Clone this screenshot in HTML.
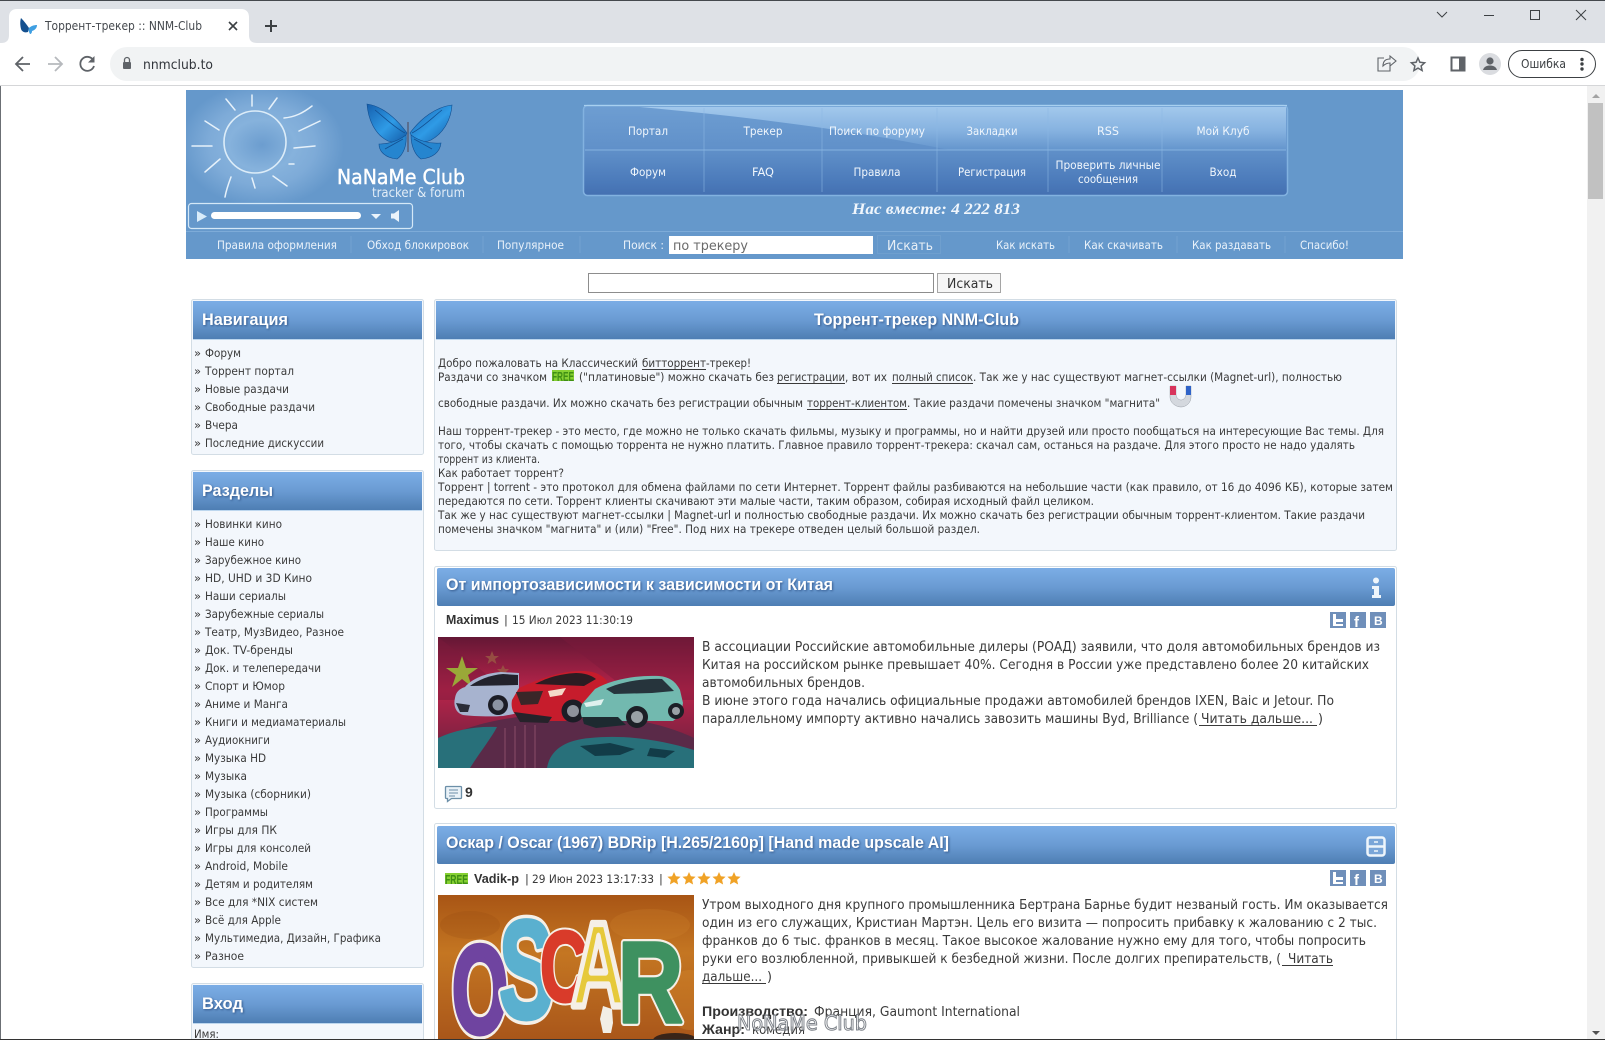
<!DOCTYPE html>
<html lang="ru"><head><meta charset="utf-8"><title>Торрент-трекер :: NNM-Club</title>
<style>
html,body{margin:0;padding:0;background:#fff;overflow:hidden}
svg{display:block;position:absolute;left:0;top:0}
text{white-space:pre}
.t{font:11.5px "DejaVu Sans",sans-serif;fill:#3a3a3a}
.a{font:13.5px "DejaVu Sans",sans-serif;fill:#3a3a3a}
.ab{font:bold 14px "Liberation Sans",sans-serif;fill:#333}
.h{font:bold 16.5px "Liberation Sans",sans-serif;fill:#fff;filter:drop-shadow(1px 1px 1px #34598c)}
.n{font:11.5px "DejaVu Sans",sans-serif;fill:#eaf2fa}
.m{font:11.5px "DejaVu Sans",sans-serif;fill:#f0f6fc;text-anchor:middle}
.os{font-family:"Liberation Sans",sans-serif;font-weight:bold;font-size:100px}
</style></head><body>
<svg width="1605" height="1040" viewBox="0 0 1605 1040" xmlns="http://www.w3.org/2000/svg">
<defs>
<linearGradient id="hd" x1="0" y1="0" x2="0" y2="1"><stop offset="0" stop-color="#7badE6"/><stop offset=".5" stop-color="#6a9bd3"/><stop offset="1" stop-color="#4e7eb3"/></linearGradient>
<linearGradient id="mn" x1="0" y1="0" x2="0" y2="1"><stop offset="0" stop-color="#6e9ed2"/><stop offset=".5" stop-color="#6090c9"/><stop offset=".85" stop-color="#4b7aba"/><stop offset="1" stop-color="#4470b1"/></linearGradient>
<linearGradient id="gl" x1="0" y1="0" x2="0" y2="1"><stop offset="0" stop-color="#a2c8ec"/><stop offset=".55" stop-color="#86b2e0"/><stop offset="1" stop-color="#6495cd"/></linearGradient>
<radialGradient id="sun"><stop offset="0" stop-color="#6c9dcf"/><stop offset=".4" stop-color="#86b2dc"/><stop offset=".65" stop-color="#7eabd8"/><stop offset="1" stop-color="#6598cb"/></radialGradient>
<linearGradient id="wing" x1="0" y1="0" x2="1" y2="1"><stop offset="0" stop-color="#155fae"/><stop offset=".55" stop-color="#2f9be6"/><stop offset="1" stop-color="#135aa6"/></linearGradient>
<linearGradient id="car" x1="0" y1="0" x2="0" y2="1"><stop offset="0" stop-color="#641735"/><stop offset=".4" stop-color="#b8244a"/><stop offset=".72" stop-color="#8a2243"/><stop offset="1" stop-color="#3c2a42"/></linearGradient>
<linearGradient id="osc" x1="0" y1="0" x2="0" y2="1"><stop offset="0" stop-color="#a85515"/><stop offset=".4" stop-color="#c47622"/><stop offset="1" stop-color="#a9561a"/></linearGradient>
<clipPath id="c0"><rect x="186" y="90" width="1217" height="169"/></clipPath>
<clipPath id="c1"><rect x="438" y="637" width="256" height="131"/></clipPath>
<clipPath id="c2"><rect x="438" y="895" width="256" height="145"/></clipPath>
</defs>

<!-- browser chrome -->
<rect width="1605" height="43" fill="#dee1e6"/>
<rect width="1605" height="1" fill="#44484d"/>
<rect y="43" width="1605" height="42" fill="#fff"/>
<rect y="85" width="1605" height="1" fill="#d5d6d8"/>
<path d="M1 43C7 43 9 40 9 35V17C9 12 12 9 17 9H241C246 9 249 12 249 17V35C249 40 251 43 257 43Z" fill="#fff"/>
<g transform="translate(20,18)"><path d="M1 0C4 3 7 7 9 10L8 14C5 15 2 14 1 11C0 7 0 3 1 0Z" fill="#14508f"/><path d="M9 10C11 8 14 7 17 7C17 10 15 12 12 13C12 15 11 16 10 16C9 14 8 12 9 10Z" fill="#3f9fe2"/></g>
<text x="45" y="30" textLength="157" lengthAdjust="spacingAndGlyphs" style="font:12.5px 'DejaVu Sans',sans-serif;fill:#45494e">Торрент-трекер :: NNM-Club</text>
<path d="M229 22l8 8M237 22l-8 8" stroke="#3c4043" stroke-width="1.6"/>
<path d="M271 20v12M265 26h12" stroke="#3c4043" stroke-width="2"/>
<rect x="110" y="47" width="1310" height="34" rx="17" fill="#f1f3f4"/>
<path d="M30 64H17M23 57l-7 7 7 7" fill="none" stroke="#5f6368" stroke-width="1.8"/>
<path d="M48 64H61M55 57l7 7-7 7" fill="none" stroke="#b6b9bd" stroke-width="1.8"/>
<path d="M93.5 60.5A7 7 0 1 0 94 66" fill="none" stroke="#5f6368" stroke-width="1.8"/><path d="M94.500 56v6.500h-6.500z" fill="#5f6368"/>
<rect x="123" y="62" width="8" height="7" rx="1" fill="#5f6368"/><path d="M124.500 62v-2a2.500 2.500 0 0 1 5 0v2" fill="none" stroke="#5f6368" stroke-width="1.300"/>
<text x="143" y="69" textLength="70" lengthAdjust="spacingAndGlyphs" style="font:13.500px 'DejaVu Sans',sans-serif;fill:#30343a">nnmclub.to</text>
<path d="M1384 58h-6v13h12v-5M1383 66c0-5 3-7 7-7v-3l6 5-6 5v-3c-3 0-5 1-7 3z" fill="none" stroke="#5f6368" stroke-width="1.100"/>
<path d="M1418 58l1.900 4.300 4.700.5-3.500 3.100 1 4.600-4.100-2.400-4.100 2.400 1-4.600-3.500-3.100 4.700-.5z" fill="none" stroke="#5f6368" stroke-width="1.500"/>
<rect x="1451.500" y="57.500" width="13" height="13" fill="none" stroke="#5f6368" stroke-width="2"/><rect x="1459" y="57" width="6" height="14" fill="#5f6368"/>
<circle cx="1490" cy="64" r="11" fill="#dadce0"/><circle cx="1490" cy="61" r="3.600" fill="#5f6368"/><path d="M1483 70c1-3.500 4-4.500 7-4.500s6 1 7 4.500z" fill="#5f6368"/>
<rect x="1508.500" y="50.500" width="87" height="27" rx="13.500" fill="#fff" stroke="#3c4043" stroke-width="1"/>
<text x="1521" y="68" textLength="45" lengthAdjust="spacingAndGlyphs" style="font:12.500px 'DejaVu Sans',sans-serif;fill:#3c4043">Ошибка</text>
<circle cx="1582" cy="59.500" r="1.700" fill="#3c4043"/><circle cx="1582" cy="64" r="1.700" fill="#3c4043"/><circle cx="1582" cy="69" r="1.700" fill="#3c4043"/>
<path d="M1437 12l5 5 5-5" fill="none" stroke="#3c4043" stroke-width="1"/>
<path d="M1484 15.500h10" stroke="#3c4043" stroke-width="1"/>
<rect x="1530.500" y="10.500" width="9" height="9" fill="none" stroke="#3c4043" stroke-width="1"/>
<path d="M1576 10l10 10M1586 10l-10 10" stroke="#3c4043" stroke-width="1"/>

<!-- scrollbar -->
<rect x="1587" y="86" width="18" height="954" fill="#f1f1f1"/>
<rect x="1588" y="103" width="15" height="96" fill="#c1c1c1"/>
<path d="M1592 98l4-4 4 4z" fill="#a3a3a3"/><path d="M1592 1031l4 4 4-4z" fill="#505050"/>

<!-- site header -->
<rect x="186" y="90" width="1217" height="169" fill="#6598cb"/>
<rect x="186" y="231" width="1217" height="1" fill="#7dabd8"/>
<g clip-path="url(#c0)"><ellipse cx="262" cy="145" rx="82" ry="62" fill="url(#sun)"/></g>
<circle cx="255" cy="142" r="31" fill="none" stroke="#dcecf8" stroke-width="1.600"/>
<g fill="none" stroke="#e6f1fa" stroke-width="1.500" stroke-linecap="round">
<path d="M226 99l9 11M252 95v11M277 98l-8 11M312 106c-9 7-17 11-28 12M320 121l-21 10M315 146l-21 2M294 164h-5M287 186l-14-10M252 178l3 10M231 177c-3 8-5 14-6 20M220 159l-15 13M219 130l-14-9M212 146h-20"/></g>
<g stroke="#134f90" stroke-width=".6">
<path d="M407 133C396 118 382 106 367 104C368 118 374 134 388 141C396 144 404 141 407 133Z" fill="url(#wing)"/>
<path d="M406 135C398 141 388 144 379 144C379 152 386 158 397 159C403 155 407 146 406 135Z" fill="#2585cf"/>
<path d="M410 133C421 118 436 107 452 105C451 119 444 133 431 140C423 144 414 141 410 133Z" fill="url(#wing)"/>
<path d="M411 135C419 141 430 144 441 143C440 152 433 158 421 159C415 155 411 146 411 135Z" fill="#2585cf"/>
<path d="M375 110C385 118 395 128 405 133M442 110C432 118 422 128 412 133M385 149l18-10M432 149l-18-10" fill="none" stroke-width=".8"/>
<path d="M408 122v30" stroke="#56617a" stroke-width="1.500"/>
</g>
<text x="337" y="184" textLength="128" lengthAdjust="spacingAndGlyphs" style="font:20px 'DejaVu Sans',sans-serif;fill:#fff;stroke:#fff;stroke-width:.4">NaNaMe Club</text>
<text x="372" y="197" textLength="93" lengthAdjust="spacingAndGlyphs" style="font:13.500px 'DejaVu Sans',sans-serif;fill:#e2edf7">tracker &amp; forum</text>
<rect x="188.500" y="203.500" width="224" height="25" rx="3" fill="none" stroke="#d4e8f7" stroke-width="1.200"/>
<path d="M197 211l10 5.500-10 5.500z" fill="#d9ecfa"/>
<rect x="211" y="212" width="150" height="7" rx="3.500" fill="#fff"/>
<path d="M371 214h10l-5 5z" fill="#eaf3fb"/>
<path d="M391 213.500h3l5-3.500v12l-5-3.500h-3z" fill="#eaf3fb"/>

<!-- top menu -->
<rect x="583.500" y="105.500" width="704" height="90" rx="4" fill="url(#mn)" stroke="#82b2e0" stroke-width="1.500"/>
<path d="M584 105.500H1287" stroke="#a8d0f0" stroke-width="1.200"/>
<path d="M640 107H1286V150H950C850 130 760 118 640 107Z" fill="url(#gl)"/>
<path d="M585 150H1286" stroke="#8fbbe6" stroke-width="1" opacity=".8"/>
<path d="M704 108V192M822 108V192M937 108V192M1048 108V192M1162 108V192" stroke="#8cb8e4" stroke-width="1" opacity=".55"/>
<text class="m" x="648" y="135" textLength="40" lengthAdjust="spacingAndGlyphs">Портал</text>
<text class="m" x="763" y="135" textLength="39" lengthAdjust="spacingAndGlyphs">Трекер</text>
<text class="m" x="877" y="135" textLength="96" lengthAdjust="spacingAndGlyphs">Поиск по форуму</text>
<text class="m" x="992" y="135" textLength="51" lengthAdjust="spacingAndGlyphs">Закладки</text>
<text class="m" x="1108" y="135" textLength="22" lengthAdjust="spacingAndGlyphs">RSS</text>
<text class="m" x="1223" y="135" textLength="53" lengthAdjust="spacingAndGlyphs">Мой Клуб</text>
<text class="m" x="648" y="176" textLength="36" lengthAdjust="spacingAndGlyphs">Форум</text>
<text class="m" x="763" y="176" textLength="22" lengthAdjust="spacingAndGlyphs">FAQ</text>
<text class="m" x="877" y="176" textLength="47" lengthAdjust="spacingAndGlyphs">Правила</text>
<text class="m" x="992" y="176" textLength="68" lengthAdjust="spacingAndGlyphs">Регистрация</text>
<text class="m" x="1108" y="169" textLength="105" lengthAdjust="spacingAndGlyphs">Проверить личные</text>
<text class="m" x="1108" y="183" textLength="60" lengthAdjust="spacingAndGlyphs">сообщения</text>
<text class="m" x="1223" y="176" textLength="27" lengthAdjust="spacingAndGlyphs">Вход</text>
<text x="852" y="214" textLength="168" lengthAdjust="spacingAndGlyphs" style="font:italic bold 15.500px 'Liberation Serif',serif;fill:#f0f6fc">Нас вместе: 4 222 813</text>

<!-- subnav -->
<text class="n" x="217" y="249" textLength="120" lengthAdjust="spacingAndGlyphs">Правила оформления</text>
<text class="n" x="367" y="249" textLength="102" lengthAdjust="spacingAndGlyphs">Обход блокировок</text>
<text class="n" x="497" y="249" textLength="67" lengthAdjust="spacingAndGlyphs">Популярное</text>
<text class="n" x="623" y="249" textLength="41" lengthAdjust="spacingAndGlyphs">Поиск :</text>
<text class="n" x="996" y="249" textLength="59" lengthAdjust="spacingAndGlyphs">Как искать</text>
<text class="n" x="1084" y="249" textLength="79" lengthAdjust="spacingAndGlyphs">Как скачивать</text>
<text class="n" x="1192" y="249" textLength="79" lengthAdjust="spacingAndGlyphs">Как раздавать</text>
<text class="n" x="1300" y="249" textLength="49" lengthAdjust="spacingAndGlyphs">Спасибо!</text>
<path d="M351 236v17M483 236v17M580 236v17M1069 236v17M1177 236v17M1285 236v17" stroke="#74a2d0"/>
<rect x="669" y="236" width="204" height="18" fill="#fff"/>
<text x="673" y="250" textLength="75" lengthAdjust="spacingAndGlyphs" style="font:13.300px 'DejaVu Sans',sans-serif;fill:#6a6a6a">по трекеру</text>
<rect x="877.500" y="235.500" width="63" height="18" fill="none" stroke="#6f9fce"/>
<text x="887" y="250" textLength="46" lengthAdjust="spacingAndGlyphs" style="font:13.300px 'DejaVu Sans',sans-serif;fill:#e8eff6">Искать</text>

<!-- search -->
<rect x="588.500" y="273.500" width="345" height="19" fill="#fff" stroke="#8d8d8d"/>
<rect x="937.500" y="273.500" width="63" height="19" fill="#f6f6f6" stroke="#a5a5a5"/>
<text x="947" y="288" textLength="46" lengthAdjust="spacingAndGlyphs" style="font:13.300px 'DejaVu Sans',sans-serif;fill:#333">Искать</text>

<!-- sidebar boxes -->
<rect x="191.500" y="299.500" width="232" height="155" rx="2" fill="#f3f7fc" stroke="#d3dde5"/>
<rect x="193" y="301" width="229" height="38" fill="url(#hd)"/><rect x="193" y="339" width="229" height="1" fill="#bcd6ee"/>
<text class="h" x="202" y="325" textLength="86" lengthAdjust="spacingAndGlyphs">Навигация</text>
<g class="t">
<text x="194" y="357">»</text><text x="205" y="357" textLength="36" lengthAdjust="spacingAndGlyphs">Форум</text>
<text x="194" y="375">»</text><text x="205" y="375" textLength="89" lengthAdjust="spacingAndGlyphs">Торрент портал</text>
<text x="194" y="393">»</text><text x="205" y="393" textLength="84" lengthAdjust="spacingAndGlyphs">Новые раздачи</text>
<text x="194" y="411">»</text><text x="205" y="411" textLength="110" lengthAdjust="spacingAndGlyphs">Свободные раздачи</text>
<text x="194" y="429">»</text><text x="205" y="429" textLength="33" lengthAdjust="spacingAndGlyphs">Вчера</text>
<text x="194" y="447">»</text><text x="205" y="447" textLength="119" lengthAdjust="spacingAndGlyphs">Последние дискуссии</text>
</g>

<rect x="191.500" y="470.500" width="232" height="497" rx="2" fill="#f3f7fc" stroke="#d3dde5"/>
<rect x="193" y="472" width="229" height="38" fill="url(#hd)"/><rect x="193" y="510" width="229" height="1" fill="#bcd6ee"/>
<text class="h" x="202" y="496" textLength="71" lengthAdjust="spacingAndGlyphs">Разделы</text>
<g class="t">
<text x="194" y="528">»</text><text x="205" y="528" textLength="77" lengthAdjust="spacingAndGlyphs">Новинки кино</text>
<text x="194" y="546">»</text><text x="205" y="546" textLength="59" lengthAdjust="spacingAndGlyphs">Наше кино</text>
<text x="194" y="564">»</text><text x="205" y="564" textLength="96" lengthAdjust="spacingAndGlyphs">Зарубежное кино</text>
<text x="194" y="582">»</text><text x="205" y="582" textLength="107" lengthAdjust="spacingAndGlyphs">HD, UHD и 3D Кино</text>
<text x="194" y="600">»</text><text x="205" y="600" textLength="81" lengthAdjust="spacingAndGlyphs">Наши сериалы</text>
<text x="194" y="618">»</text><text x="205" y="618" textLength="119" lengthAdjust="spacingAndGlyphs">Зарубежные сериалы</text>
<text x="194" y="636">»</text><text x="205" y="636" textLength="139" lengthAdjust="spacingAndGlyphs">Театр, МузВидео, Разное</text>
<text x="194" y="654">»</text><text x="205" y="654" textLength="88" lengthAdjust="spacingAndGlyphs">Док. TV-бренды</text>
<text x="194" y="672">»</text><text x="205" y="672" textLength="116" lengthAdjust="spacingAndGlyphs">Док. и телепередачи</text>
<text x="194" y="690">»</text><text x="205" y="690" textLength="80" lengthAdjust="spacingAndGlyphs">Спорт и Юмор</text>
<text x="194" y="708">»</text><text x="205" y="708" textLength="83" lengthAdjust="spacingAndGlyphs">Аниме и Манга</text>
<text x="194" y="726">»</text><text x="205" y="726" textLength="141" lengthAdjust="spacingAndGlyphs">Книги и медиаматериалы</text>
<text x="194" y="744">»</text><text x="205" y="744" textLength="65" lengthAdjust="spacingAndGlyphs">Аудиокниги</text>
<text x="194" y="762">»</text><text x="205" y="762" textLength="61" lengthAdjust="spacingAndGlyphs">Музыка HD</text>
<text x="194" y="780">»</text><text x="205" y="780" textLength="42" lengthAdjust="spacingAndGlyphs">Музыка</text>
<text x="194" y="798">»</text><text x="205" y="798" textLength="106" lengthAdjust="spacingAndGlyphs">Музыка (сборники)</text>
<text x="194" y="816">»</text><text x="205" y="816" textLength="63" lengthAdjust="spacingAndGlyphs">Программы</text>
<text x="194" y="834">»</text><text x="205" y="834" textLength="72" lengthAdjust="spacingAndGlyphs">Игры для ПК</text>
<text x="194" y="852">»</text><text x="205" y="852" textLength="106" lengthAdjust="spacingAndGlyphs">Игры для консолей</text>
<text x="194" y="870">»</text><text x="205" y="870" textLength="83" lengthAdjust="spacingAndGlyphs">Android, Mobile</text>
<text x="194" y="888">»</text><text x="205" y="888" textLength="108" lengthAdjust="spacingAndGlyphs">Детям и родителям</text>
<text x="194" y="906">»</text><text x="205" y="906" textLength="113" lengthAdjust="spacingAndGlyphs">Все для *NIX систем</text>
<text x="194" y="924">»</text><text x="205" y="924" textLength="76" lengthAdjust="spacingAndGlyphs">Всё для Apple</text>
<text x="194" y="942">»</text><text x="205" y="942" textLength="176" lengthAdjust="spacingAndGlyphs">Мультимедиа, Дизайн, Графика</text>
<text x="194" y="960">»</text><text x="205" y="960" textLength="39" lengthAdjust="spacingAndGlyphs">Разное</text>
</g>

<rect x="191.500" y="983.500" width="232" height="70" rx="2" fill="#f3f7fc" stroke="#d3dde5"/>
<rect x="193" y="985" width="229" height="38" fill="url(#hd)"/><rect x="193" y="1023" width="229" height="1" fill="#bcd6ee"/>
<text class="h" x="202" y="1009" textLength="41" lengthAdjust="spacingAndGlyphs">Вход</text>
<text class="t" x="194" y="1038" textLength="25" lengthAdjust="spacingAndGlyphs">Имя:</text>

<!-- intro box -->
<rect x="434.500" y="299.500" width="962" height="251" rx="2" fill="#f3f7fc" stroke="#d3dde5"/>
<rect x="436" y="301" width="959" height="38" fill="url(#hd)"/><rect x="436" y="339" width="959" height="1" fill="#bcd6ee"/>
<text class="h" x="814" y="325" textLength="205" lengthAdjust="spacingAndGlyphs">Торрент-трекер NNM-Club</text>
<g class="t">
<text x="438" y="367" textLength="200" lengthAdjust="spacingAndGlyphs">Добро пожаловать на Классический</text>
<text x="642" y="367" textLength="64" lengthAdjust="spacingAndGlyphs">битторрент</text><rect x="642" y="369" width="64" height="1" fill="#3a3a3a"/>
<text x="706" y="367" textLength="45" lengthAdjust="spacingAndGlyphs">-трекер!</text>
<text x="438" y="381" textLength="109" lengthAdjust="spacingAndGlyphs">Раздачи со значком</text>
<rect x="552" y="370" width="22" height="11" fill="#86d032"/>
<text x="552" y="381" textLength="22" lengthAdjust="spacingAndGlyphs" style="font:bold 13px 'Liberation Sans',sans-serif;fill:#3f8f14">FREE</text>
<text x="579" y="381" textLength="195" lengthAdjust="spacingAndGlyphs">("платиновые") можно скачать без</text>
<text x="777" y="381" textLength="68" lengthAdjust="spacingAndGlyphs">регистрации</text><rect x="777" y="383" width="68" height="1" fill="#3a3a3a"/>
<text x="845" y="381" textLength="42" lengthAdjust="spacingAndGlyphs">, вот их</text>
<text x="892" y="381" textLength="81" lengthAdjust="spacingAndGlyphs">полный список</text><rect x="892" y="383" width="81" height="1" fill="#3a3a3a"/>
<text x="973" y="381" textLength="369" lengthAdjust="spacingAndGlyphs">. Так же у нас существуют магнет-ссылки (Magnet-url), полностью</text>
<text x="438" y="407" textLength="365" lengthAdjust="spacingAndGlyphs">свободные раздачи. Их можно скачать без регистрации обычным</text>
<text x="807" y="407" textLength="100" lengthAdjust="spacingAndGlyphs">торрент-клиентом</text><rect x="807" y="409" width="100" height="1" fill="#3a3a3a"/>
<text x="907" y="407" textLength="253" lengthAdjust="spacingAndGlyphs">. Такие раздачи помечены значком "магнита"</text>
<text x="438" y="435" textLength="946" lengthAdjust="spacingAndGlyphs">Наш торрент-трекер - это место, где можно не только скачать фильмы, музыку и программы, но и найти друзей или просто пообщаться на интересующие Вас темы. Для</text>
<text x="438" y="449" textLength="917" lengthAdjust="spacingAndGlyphs">того, чтобы скачать с помощью торрента не нужно платить. Главное правило торрент-трекера: скачал сам, останься на раздаче. Для этого просто не надо удалять</text>
<text x="438" y="463" textLength="102" lengthAdjust="spacingAndGlyphs">торрент из клиента.</text>
<text x="438" y="477" textLength="126" lengthAdjust="spacingAndGlyphs">Как работает торрент?</text>
<text x="438" y="491" textLength="955" lengthAdjust="spacingAndGlyphs">Торрент | torrent - это протокол для обмена файлами по сети Интернет. Торрент файлы разбиваются на небольшие части (как правило, от 16 до 4096 КБ), которые затем</text>
<text x="438" y="505" textLength="656" lengthAdjust="spacingAndGlyphs">передаются по сети. Торрент клиенты скачивают эти малые части, таким образом, собирая исходный файл целиком.</text>
<text x="438" y="519" textLength="927" lengthAdjust="spacingAndGlyphs">Так же у нас существуют магнет-ссылки | Magnet-url и полностью свободные раздачи. Их можно скачать без регистрации обычным торрент-клиентом. Такие раздачи</text>
<text x="438" y="533" textLength="542" lengthAdjust="spacingAndGlyphs">помечены значком "магнита" и (или) "Free". Под них на трекере отведен целый большой раздел.</text>
</g>
<path d="M1170 386h6v8c0 4 3 6 5 6s5-2 5-6v-8h5v11c0 6-5 10-10 10s-11-4-11-10z" fill="#d4d8de" stroke="#9aa0a8" stroke-width=".5"/>
<rect x="1170" y="386" width="6" height="9" fill="#d8345c"/><rect x="1186" y="386" width="5" height="9" fill="#2f63c8"/>

<!-- article 1 -->
<rect x="434.500" y="566.500" width="962" height="242" rx="2" fill="#fff" stroke="#d3dde5"/>
<rect x="437" y="568" width="958" height="38" rx="2" fill="url(#hd)"/>
<text class="h" x="446" y="590" textLength="387" lengthAdjust="spacingAndGlyphs">От импортозависимости к зависимости от Китая</text>
<circle cx="1376" cy="580.500" r="3" fill="#eef5fb"/><path d="M1372 586h7v9h2v3h-9v-3h2v-6h-2z" fill="#eef5fb"/>
<text class="ab" x="446" y="624" textLength="53" lengthAdjust="spacingAndGlyphs" style="font-size:12.500px">Maximus</text>
<text class="t" x="504" y="624">|</text>
<text class="t" x="512" y="624" textLength="121" lengthAdjust="spacingAndGlyphs">15 Июл 2023 11:30:19</text>
<g><rect x="1330" y="612" width="16" height="16" fill="#6f8fba"/><path d="M1333 614h3v5h7v3h-7v2h7v2h-10z" fill="#fff"/>
<rect x="1350" y="612" width="16" height="16" fill="#6f8fba"/><text x="1354" y="627" style="font:bold 15px 'Liberation Sans',sans-serif;fill:#fff">f</text>
<rect x="1370" y="612" width="16" height="16" fill="#6f8fba"/><text x="1374" y="625" style="font:bold 12px 'Liberation Sans',sans-serif;fill:#fff">B</text></g>
<g clip-path="url(#c1)">
<rect x="438" y="637" width="256" height="131" fill="url(#car)"/>
<path d="M560 637L640 700H694V637ZM438 637L520 700H438Z" fill="#7d1a3c" opacity=".45"/>
<!-- globe -->
<path d="M438 742C470 722 520 714 566 714C620 714 665 724 694 738V768H438Z" fill="#5a2a48"/>
<path d="M438 738C455 730 475 726 497 727C490 740 480 752 470 768H438Z" fill="#28707a"/>
<path d="M547 768C550 750 565 740 590 738C620 735 655 738 694 750V768Z" fill="#28707a"/>
<path d="M580 746l30-3 25 6-15 6-25 1zM650 748l25 3-10 7-18-2z" fill="#123c48"/>
<path d="M505 728v40M515 726v42M525 725v43M535 725v43" stroke="#b86f86" stroke-width="1" opacity=".5"/>
<!-- flag stars -->
<path d="M462 656l4 12h12l-10 7 4 12-10-8-10 8 4-12-10-7h12z" fill="#9aa838"/>
<path d="M492 651l2 5h5l-4 3 1.500 5-4.500-3-4.500 3 1.500-5-4-3h5zM503 665l2 4h4l-3 3 1 4-4-2-4 2 1-4-3-3h4z" fill="#9a5a44" opacity=".8"/>
<!-- left car -->
<path d="M455 698c1-6 4-9 10-11 7-8 20-14 36-15l18 1v40l-16 3c-14 1-33 0-40-1-7-2-10-9-8-17z" fill="#a7b3cf"/>
<path d="M470 686c8-6 20-11 33-12l15 1v10z" fill="#22222c"/>
<path d="M456 703l14 2-2 7h-8z" fill="#2b2d38"/>
<circle cx="498" cy="705" r="10" fill="#1c1d26"/><circle cx="498" cy="705" r="5.500" fill="#8c93a2"/>
<!-- red car -->
<path d="M512 700l7-12c20-9 42-17 62-17 13 0 20 3 26 10v30l-16 7-26 3h-40c-9-3-15-10-13-21z" fill="#c61c2c"/>
<path d="M535 684c10-5 22-10 41-11 8 0 15 2 20 6l-12 7z" fill="#2c1c22"/>
<path d="M516 692l27-1-5 13-17 1z" fill="#3a2628"/><path d="M548 691l18-3-4 7-12 2z" fill="#f3d9c8"/>
<path d="M514 712l38 5-4 6-28-1z" fill="#26222a"/>
<circle cx="573" cy="711" r="11.500" fill="#1c1d26"/><circle cx="573" cy="711" r="6" fill="#8f929c"/>
<!-- teal car -->
<path d="M582 704l13-15c18-10 42-14 64-13 11 1 17 6 21 14l3 13-2 12-8 6h-60l-26 3c-6-5-8-12-5-20z" fill="#72b9af"/>
<path d="M606 689c12-6 34-11 56-10l12 12-22 2-38 1z" fill="#26343c"/>
<path d="M582 717h36l8 8-30 3-12-4z" fill="#1d2a30"/><path d="M584 703l20-4-3 6-15 2z" fill="#dff1ee"/>
<circle cx="637" cy="717" r="11" fill="#1c1f26"/><circle cx="637" cy="717" r="6" fill="#9aa1a6"/>
<circle cx="676" cy="711" r="8" fill="#1c1f26"/><circle cx="676" cy="711" r="4" fill="#9aa1a6"/>
</g>
<g class="a">
<text x="702" y="651" textLength="678" lengthAdjust="spacingAndGlyphs">В ассоциации Российские автомобильные дилеры (РОАД) заявили, что доля автомобильных брендов из</text>
<text x="702" y="669" textLength="667" lengthAdjust="spacingAndGlyphs">Китая на российском рынке превышает 40%. Сегодня в России уже представлено более 20 китайских</text>
<text x="702" y="687" textLength="163" lengthAdjust="spacingAndGlyphs">автомобильных брендов.</text>
<text x="702" y="705" textLength="632" lengthAdjust="spacingAndGlyphs">В июне этого года начались официальные продажи автомобилей брендов IXEN, Baic и Jetour. По</text>
<text x="702" y="723" textLength="496" lengthAdjust="spacingAndGlyphs">параллельному импорту активно начались завозить машины Byd, Brilliance (</text>
<text x="1201" y="723" textLength="112" lengthAdjust="spacingAndGlyphs">Читать дальше...</text><rect x="1199" y="725" width="118" height="1" fill="#3a3a3a"/>
<text x="1318" y="723" textLength="5" lengthAdjust="spacingAndGlyphs">)</text>
</g>
<path d="M446.500 786.500h14a1 1 0 0 1 1 1v10a1 1 0 0 1-1 1h-9l-4 3v-3h-1a1 1 0 0 1-1-1v-10a1 1 0 0 1 1-1z" fill="#eaf2f8" stroke="#6c8fa8" stroke-width="1.300"/>
<path d="M449 790h9M449 793h9M449 796h6" stroke="#6c8fa8"/>
<text class="ab" x="465" y="797">9</text>

<!-- article 2 -->
<rect x="434.500" y="823.500" width="962" height="240" rx="2" fill="#fff" stroke="#d3dde5"/>
<rect x="437" y="826" width="958" height="38" rx="2" fill="url(#hd)"/>
<text class="h" x="446" y="848" textLength="503" lengthAdjust="spacingAndGlyphs">Оскар / Oscar (1967) BDRip [H.265/2160p] [Hand made upscale AI]</text>
<rect x="1367.500" y="837.500" width="17" height="18" rx="2.500" fill="#7aa6d8" stroke="#eef5fb" stroke-width="2.500"/><path d="M1367 846.500h18" stroke="#eef5fb" stroke-width="2.500"/><path d="M1374 842h4M1374 851h4" stroke="#eef5fb" stroke-width="1.500"/>
<rect x="445" y="873" width="23" height="11" fill="#86d032"/>
<text x="445" y="884" textLength="23" lengthAdjust="spacingAndGlyphs" style="font:bold 13px 'Liberation Sans',sans-serif;fill:#3f8f14">FREE</text>
<text class="ab" x="474" y="883" textLength="45" lengthAdjust="spacingAndGlyphs" style="font-size:12.500px">Vadik-p</text>
<text class="t" x="525" y="883">|</text>
<text class="t" x="532" y="883" textLength="122" lengthAdjust="spacingAndGlyphs">29 Июн 2023 13:17:33</text>
<text class="t" x="659" y="883">|</text>
<g fill="#f0a226"><path id="s" d="M674 872l1.900 4.300 4.700.5-3.500 3.100 1 4.600-4.100-2.400-4.100 2.400 1-4.600-3.500-3.100 4.700-.5z"/><use href="#s" x="15"/><use href="#s" x="30"/><use href="#s" x="45"/><use href="#s" x="60"/></g>
<g><rect x="1330" y="870" width="16" height="16" fill="#6f8fba"/><path d="M1333 872h3v5h7v3h-7v2h7v2h-10z" fill="#fff"/>
<rect x="1350" y="870" width="16" height="16" fill="#6f8fba"/><text x="1354" y="885" style="font:bold 15px 'Liberation Sans',sans-serif;fill:#fff">f</text>
<rect x="1370" y="870" width="16" height="16" fill="#6f8fba"/><text x="1374" y="883" style="font:bold 12px 'Liberation Sans',sans-serif;fill:#fff">B</text></g>
<g clip-path="url(#c2)">
<rect x="438" y="895" width="256" height="145" fill="url(#osc)"/>
<ellipse cx="470" cy="925" rx="30" ry="14" fill="#8f4510" opacity=".2"/><ellipse cx="650" cy="925" rx="40" ry="16" fill="#d98a30" opacity=".2"/>
<ellipse cx="690" cy="1000" rx="25" ry="30" fill="#d99030" opacity=".3"/>
<g class="os" stroke-linejoin="round">
<text transform="translate(452,1033) scale(.72,1.25)" fill="#6f44a0" stroke="#f5efe6" stroke-width="9">O</text>
<text transform="translate(452,1033) scale(.72,1.25)" fill="#6f44a0" stroke="#6f44a0" stroke-width="4">O</text>
<text transform="translate(499,1018) scale(.82,1.4)" fill="#5ab0cf" stroke="#f5efe6" stroke-width="8">S</text>
<text transform="translate(499,1018) scale(.82,1.4)" fill="#5ab0cf" stroke="#5ab0cf" stroke-width="3">S</text>
<text transform="translate(540,1001) scale(.66,1)" fill="#d93b2a" stroke="#f5efe6" stroke-width="7">C</text>
<text transform="translate(540,1001) scale(.66,1)" fill="#d93b2a" stroke="#d93b2a" stroke-width="3">C</text>
<text transform="translate(571,1006) scale(.76,1.2)" fill="#e6c93a" stroke="#f5efe6" stroke-width="6">A</text>
<text transform="translate(618,1022) scale(.9,1.15)" fill="#3e9160" stroke="#f5efe6" stroke-width="7">R</text>
<text transform="translate(618,1022) scale(.9,1.15)" fill="#3e9160" stroke="#3e9160" stroke-width="3">R</text>
</g>
<path d="M603 1006l9 3 1 14-2 10h-8l-3-14z" fill="#f2eee6"/>
<ellipse cx="675" cy="1040" rx="22" ry="7" fill="#3a2418"/>
</g>
<g class="a">
<text x="702" y="909" textLength="686" lengthAdjust="spacingAndGlyphs">Утром выходного дня крупного промышленника Бертрана Барнье будит незваный гость. Им оказывается</text>
<text x="702" y="927" textLength="675" lengthAdjust="spacingAndGlyphs">один из его служащих, Кристиан Мартэн. Цель его визита — попросить прибавку к жалованию с 2 тыс.</text>
<text x="702" y="945" textLength="664" lengthAdjust="spacingAndGlyphs">франков до 6 тыс. франков в месяц. Такое высокое жалование нужно ему для того, чтобы попросить</text>
<text x="702" y="963" textLength="579" lengthAdjust="spacingAndGlyphs">руки его возлюбленной, привыкшей к безбедной жизни. После долгих препирательств, (</text>
<text x="1288" y="963" textLength="45" lengthAdjust="spacingAndGlyphs">Читать</text><rect x="1282" y="965" width="51" height="1" fill="#3a3a3a"/>
<text x="702" y="981" textLength="60" lengthAdjust="spacingAndGlyphs">дальше...</text><rect x="702" y="983" width="64" height="1" fill="#3a3a3a"/>
<text x="767" y="981" textLength="5" lengthAdjust="spacingAndGlyphs">)</text>
<text x="814" y="1016" textLength="206" lengthAdjust="spacingAndGlyphs">Франция, Gaumont International</text>
<text x="752" y="1034" textLength="53" lengthAdjust="spacingAndGlyphs">комедия</text>
</g>
<text class="ab" x="702" y="1016" textLength="106" lengthAdjust="spacingAndGlyphs">Производство:</text>
<text class="ab" x="702" y="1034" textLength="43" lengthAdjust="spacingAndGlyphs">Жанр:</text>
<text x="737" y="1030" textLength="130" lengthAdjust="spacingAndGlyphs" style="font:20px 'DejaVu Sans',sans-serif;fill:#fff;fill-opacity:.7;stroke:#7d8289;stroke-width:1">NoNaMe Club</text>

<!-- outer frame -->
<rect y="86" width="1" height="954" fill="#6b6f74"/>
<rect y="1039" width="1605" height="1" fill="#333"/>
</svg>
</body></html>
